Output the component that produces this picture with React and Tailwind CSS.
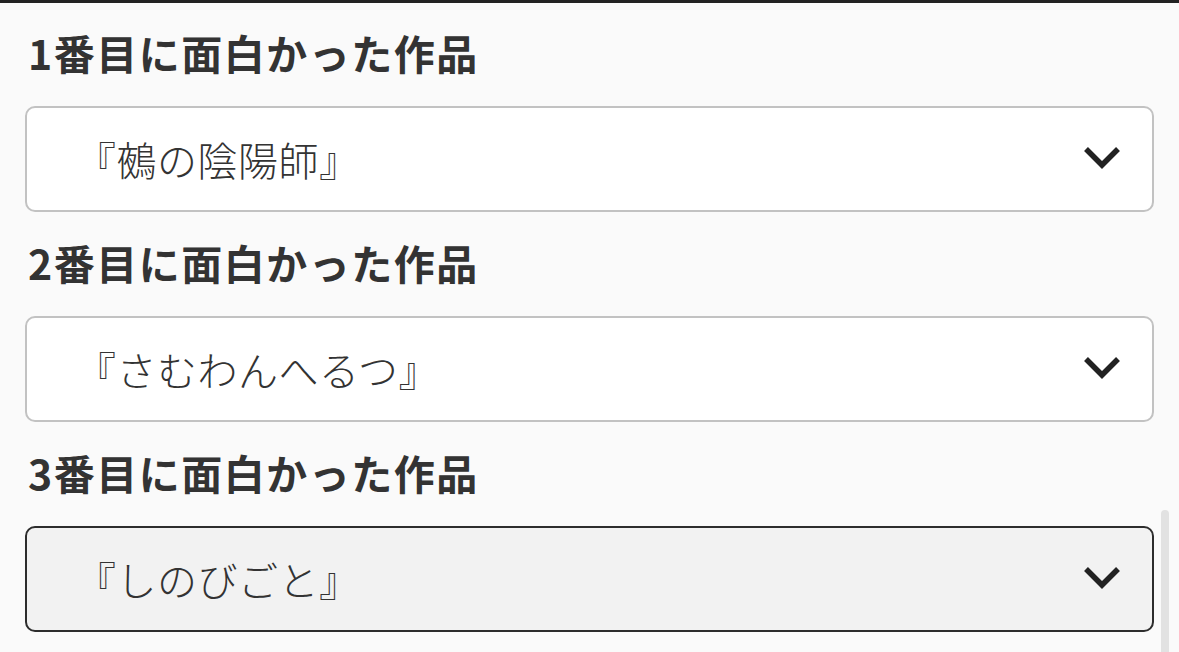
export default function App() {
  const items = [
    { label: "1番目に面白かった作品", value: "『鵺の陰陽師』", focused: false },
    { label: "2番目に面白かった作品", value: "『さむわんへるつ』", focused: false },
    { label: "3番目に面白かった作品", value: "『しのびごと』", focused: true },
  ];
  return (
    <div
      className="relative w-[1179px] h-[652px] overflow-hidden bg-[#fafafa] border-t-[3px] border-[#222222] text-[#333333]"
      style={{ fontFamily: '"Noto Sans CJK JP", "Noto Sans", sans-serif' }}
    >
      <div className="flex flex-col px-[25px]">
        {items.map((it, i) => (
          <div key={i} className="flex flex-col">
            <div className={`flex items-center pl-[3px] pb-[4px] ${i === 0 ? "h-[103px]" : "h-[104px]"}`}>
              <span className="text-[41px] font-bold leading-none tracking-[1.5px]">{it.label}</span>
            </div>
            <div
              className={`flex items-center justify-between h-[106px] rounded-[10px] border-2 pl-[49px] pr-[30px] ${
                it.focused ? "border-[#2d2d2d] bg-[#f2f2f2]" : "border-[#c2c2c2] bg-white"
              }`}
            >
              <span className="text-[40px] font-light leading-none tracking-[0.5px]">{it.value}</span>
              <svg width="40" height="26" viewBox="0 0 40 26" className="mt-[-2px]">
                <path d="M4 4 L20 20 L36 4" fill="none" stroke="#222" strokeWidth="5.5" strokeLinecap="butt" strokeLinejoin="miter" />
              </svg>
            </div>
          </div>
        ))}
      </div>
      <div className="absolute left-[1161px] top-[507px] w-[8px] h-[160px] rounded-full bg-[#e2e2e2]" />
    </div>
  );
}
